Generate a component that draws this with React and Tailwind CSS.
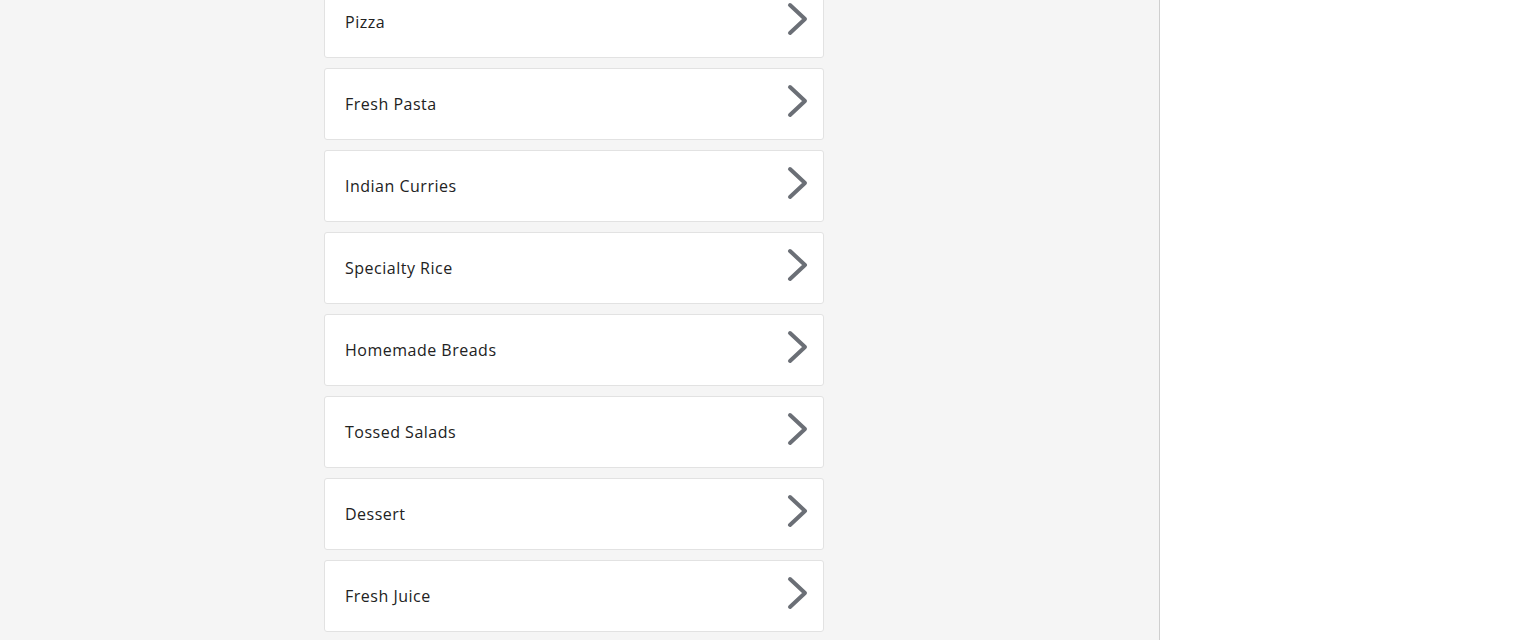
import React from 'react';

const categories = [
  'Pizza',
  'Fresh Pasta',
  'Indian Curries',
  'Specialty Rice',
  'Homemade Breads',
  'Tossed Salads',
  'Dessert',
  'Fresh Juice',
];

const Chevron = () => (
  <svg width="24" height="36" viewBox="0 0 24 36" fill="none" className="shrink-0">
    <polyline
      points="5,4 20,18 5,32"
      stroke="#6b6f76"
      strokeWidth="4"
      strokeLinecap="round"
      strokeLinejoin="round"
    />
  </svg>
);

export default function App() {
  return (
    <div className="h-[640px] overflow-hidden flex bg-[#f5f5f5]" style={{ fontFamily: '"Open Sans", sans-serif' }}>
      <main className="flex-1 min-w-0 pl-[324px]">
        {/* Category list */}
        <div className="w-[500px] -mt-[14px] flex flex-col gap-[10px]">
          {categories.map((name) => (
            <div
              key={name}
              className="h-[72px] flex items-center justify-between bg-white border border-[#e2e2e2] rounded-[3px] pl-5 pr-[14px]"
            >
              <span className="text-[16px] text-[#222] tracking-[0.5px] -mt-[1px]">{name}</span>
              <div className="-mt-[6px]">
                <Chevron />
              </div>
            </div>
          ))}
        </div>
      </main>
      <aside className="w-[371px] shrink-0 bg-white border-l border-[#cfcfcf]" />
    </div>
  );
}
